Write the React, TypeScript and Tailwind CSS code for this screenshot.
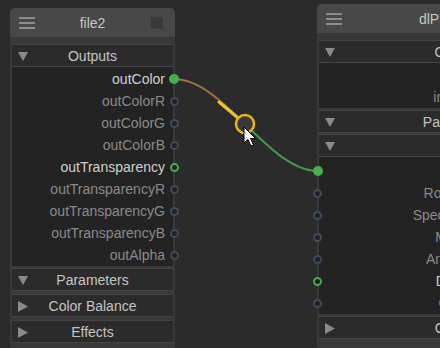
import React from "react";

type PortKind = "filled" | "green" | "blue" | "none";

const Port: React.FC<{ kind: PortKind; side: "left" | "right" }> = ({ kind, side }) => {
  if (kind === "none") return null;
  const pos = side === "right" ? "right-[-6px]" : "left-[-6px]";
  if (kind === "filled") {
    return <span className={`absolute ${pos} top-[6px] w-[10px] h-[10px] rounded-full bg-[#45b04e]`} />;
  }
  const ring = kind === "green" ? "border-[#43ad4c]" : "border-[#3c4a62]";
  return (
    <span className={`absolute ${pos} top-[6.5px] w-[9px] h-[9px] rounded-full border-2 ${ring} bg-[#222222]`} />
  );
};

const Hamburger: React.FC = () => (
  <div className="flex flex-col gap-[3px] w-[16px]">
    <span className="h-[2px] bg-[#8c8c8c]" />
    <span className="h-[2px] bg-[#8c8c8c]" />
    <span className="h-[2px] bg-[#8c8c8c]" />
  </div>
);

const Triangle: React.FC<{ open: boolean }> = ({ open }) =>
  open ? (
    <svg width="10" height="9" viewBox="0 0 10 9" className="absolute left-[6px] top-[7px]">
      <path d="M0 0 L10 0 L5 9 Z" fill="#8a8a8a" />
    </svg>
  ) : (
    <svg width="10" height="11" viewBox="0 0 10 11" className="absolute left-[6px] top-[6px]">
      <path d="M0 0 L10 5.5 L0 11 Z" fill="#8a8a8a" />
    </svg>
  );

const Section: React.FC<{ title: string; open?: boolean }> = ({ title, open = true }) => (
  <div className="relative h-[23px] bg-[#2b2b2b] border-y border-[#444444] flex items-center justify-center text-[14px] text-[#c4c4c4]">
    <Triangle open={open} />
    <span className="leading-none">{title}</span>
  </div>
);

const Header: React.FC<{ title: string; square?: boolean }> = ({ title, square }) => (
  <div className="relative h-[29px] bg-[#484848] rounded-t-[5px] flex items-center justify-center">
    <div className="absolute left-[9px] top-[9px]">
      <Hamburger />
    </div>
    <span className="text-[14px] text-[#c6c6c6] leading-none">{title}</span>
    {square && <span className="absolute right-[12px] top-[9px] w-[12px] h-[12px] bg-[#3b3b3b]" />}
  </div>
);

const leftRows: { label: string; main?: boolean; port: PortKind }[] = [
  { label: "outColor", main: true, port: "filled" },
  { label: "outColorR", port: "blue" },
  { label: "outColorG", port: "blue" },
  { label: "outColorB", port: "blue" },
  { label: "outTransparency", main: true, port: "green" },
  { label: "outTransparencyR", port: "blue" },
  { label: "outTransparencyG", port: "blue" },
  { label: "outTransparencyB", port: "blue" },
  { label: "outAlpha", port: "blue" },
];

const rightRows: { label: string; main?: boolean; port: PortKind }[] = [
  { label: "Color", main: true, port: "filled" },
  { label: "Roughness", port: "blue" },
  { label: "Specular Level", port: "blue" },
  { label: "Metallic", port: "blue" },
  { label: "Anisotropy", port: "blue" },
  { label: "Density", main: true, port: "green" },
  { label: "Cutout", port: "blue" },
];

export default function App() {
  return (
    <div
      className="relative w-[440px] h-[348px] overflow-hidden bg-[#2b2b2b]"
      style={{ fontFamily: '"Liberation Sans", Arial, sans-serif' }}
    >
      {/* wires */}
      <svg className="absolute inset-0" width="440" height="348">
        <path d="M174 79 C199 79 222.5 102 246 125" fill="none" stroke="#94763a" strokeWidth="2" />
        <path d="M219 102 L238 118" fill="none" stroke="#f0c030" strokeWidth="3" strokeLinecap="round" />
        <path d="M246 125 C269.5 148 293 171 318 171" fill="none" stroke="#3f9a4c" strokeWidth="2" />
      </svg>

      {/* file2 node */}
      <div className="absolute left-[10px] top-[8px] w-[165px] bg-[#393939] rounded-t-[5px] flex flex-col">
        <Header title="file2" square />
        <div className="px-[2px] pt-[7px] flex flex-col">
          <Section title="Outputs" />
          <div className="bg-[#232323] pt-[1px]">
            {leftRows.map((r) => (
              <div key={r.label} className="relative h-[22px] flex items-center justify-end pr-[8px]">
                <span className={`text-[14px] leading-none ${r.main ? "text-[#d0d0d0]" : "text-[#8a8a8a]"}`}>
                  {r.label}
                </span>
                <Port kind={r.port} side="right" />
              </div>
            ))}
          </div>
          <div className="h-[2px]" />
          <Section title="Parameters" />
          <div className="h-[3px]" />
          <Section title="Color Balance" open={false} />
          <div className="h-[3px]" />
          <Section title="Effects" open={false} />
          <div className="h-[10px]" />
        </div>
      </div>

      {/* dlPrincipled node */}
      <div className="absolute left-[317px] top-[4px] w-[284px] bg-[#393939] rounded-t-[5px] flex flex-col">
        <Header title="dlPrincipled1" />
        <div className="px-[2px] pt-[7px] flex flex-col">
          <Section title="Outputs" />
          <div className="bg-[#232323] pt-[1px]">
            <div className="h-[22px]" />
            <div className="h-[22px] flex items-center justify-center">
              <span className="text-[14px] leading-none text-[#8a8a8a]">intensity</span>
            </div>
          </div>
          <div className="h-[2px]" />
          <Section title="Parameters" />
          <div className="h-[1px]" />
          <Section title="Base" />
          <div className="bg-[#232323] pt-[3px]">
            {rightRows.map((r) => (
              <div key={r.label} className="relative h-[22px] flex items-center justify-center">
                <span className={`text-[14px] leading-none ${r.main ? "text-[#d0d0d0]" : "text-[#8a8a8a]"}`}>
                  {r.label}
                </span>
                <Port kind={r.port} side="left" />
              </div>
            ))}
          </div>
          <div className="h-[2px]" />
          <Section title="Coating" open={false} />
          <div className="h-[10px]" />
        </div>
      </div>

      {/* drag handle + cursor */}
      <svg className="absolute inset-0" width="440" height="348">
        <circle cx="245" cy="124" r="9" fill="#383838" stroke="#e8b424" strokeWidth="2.5" />
        <path
          d="M244 127 L244 143 L248 139.5 L251 146 L253.5 145 L250.5 138.5 L255.5 138.5 Z"
          fill="#ffffff"
          stroke="#000000"
          strokeWidth="1"
          strokeLinejoin="round"
        />
      </svg>
    </div>
  );
}
